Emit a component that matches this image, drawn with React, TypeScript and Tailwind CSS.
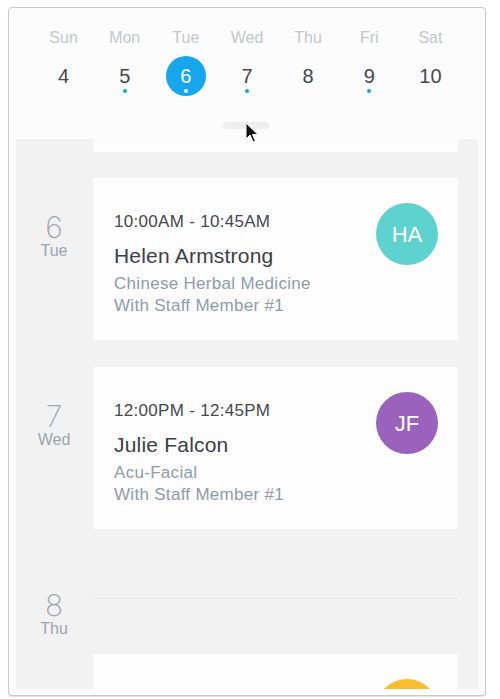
const DAYS = [
  { name: 'Sun', num: 4, dot: false },
  { name: 'Mon', num: 5, dot: true },
  { name: 'Tue', num: 6, dot: true, selected: true },
  { name: 'Wed', num: 7, dot: true },
  { name: 'Thu', num: 8, dot: false },
  { name: 'Fri', num: 9, dot: true },
  { name: 'Sat', num: 10, dot: false },
];

type Appt = {
  time: string;
  name: string;
  service: string;
  staff: string;
  initials: string;
  color: string;
};

function DateLabel({ num, day }: { num: number; day: string }) {
  return (
    <div className="w-[77px] shrink-0 flex flex-col items-center pt-[34px] pr-[1px]">
      <span className="font-['Inter'] font-extralight text-[30px] leading-[30px] text-[#9ea7b1]">
        {num}
      </span>
      <span className="text-[16px] leading-[18px] text-[#9ba4ae]">{day}</span>
    </div>
  );
}

function AppointmentCard({ appt }: { appt: Appt }) {
  return (
    <div className="flex-1 mr-[20px] bg-[#fdfdfd] h-[162px] flex pl-[21px] pr-[20px]">
      <div className="flex-1 pt-[33px]">
        <div className="text-[17px] leading-[22px] tracking-[0.3px] text-[#45494e]">{appt.time}</div>
        <div className="mt-[10px] text-[21px] leading-[26px] tracking-[0.2px] text-[#3b4046]">
          {appt.name}
        </div>
        <div className="mt-[4px] text-[17px] leading-[22px] tracking-[0.3px] text-[#8d9cab]">
          {appt.service}
        </div>
        <div className="text-[17px] leading-[22px] tracking-[0.3px] text-[#8d9cab]">{appt.staff}</div>
      </div>
      <div
        className={`mt-[25px] w-[62px] h-[62px] rounded-full flex items-center justify-center text-white text-[22px] ${appt.color}`}
      >
        {appt.initials}
      </div>
    </div>
  );
}

export default function App() {
  return (
    <div className="w-[500px] h-[699px] bg-white font-['Liberation_Sans',sans-serif] relative">
      <div className="absolute left-[8px] top-[7px] w-[478px] h-[689px] border border-[#c9c9c9] rounded-[4px] bg-[#fcfcfc] px-[7px] pb-[6px] flex flex-col overflow-hidden shadow-[0_1px_1px_rgba(0,0,0,0.12)]">
        {/* Week header */}
        <div className="h-[131px] shrink-0 flex flex-col">
          <div className="grid grid-cols-7 px-[17px] pt-[20px]">
            {DAYS.map((d) => (
              <div key={d.name} className="flex flex-col items-center">
                <span className="text-[16px] leading-[20px] text-[#c3c7cc]">{d.name}</span>
                <div
                  className={`mt-[8px] relative w-[40px] h-[40px] rounded-full flex items-center justify-center ${
                    d.selected ? 'bg-[#16a6ec]' : ''
                  }`}
                >
                  <span
                    className={`text-[20px] leading-[20px] ${
                      d.selected ? 'text-white' : 'text-[#45494e]'
                    }`}
                  >
                    {d.num}
                  </span>
                  {d.dot && (
                    <span
                      className={`absolute top-[33px] left-[18px] w-[4px] h-[4px] rounded-full ${
                        d.selected ? 'bg-white' : 'bg-[#16a6ec]'
                      }`}
                    />
                  )}
                </div>
              </div>
            ))}
          </div>
          <div className="mt-[26px] flex justify-center pr-[3px]">
            <div className="w-[46px] h-[7px] rounded-full bg-[#eeeeee]" />
          </div>
        </div>

        {/* Agenda */}
        <div className="flex-1 bg-[#f2f2f2] overflow-hidden">
          <div className="ml-[77px] mr-[20px] h-[13px] bg-[#fdfdfd]" />
          <div className="mt-[26px] flex">
            <DateLabel num={6} day="Tue" />
            <AppointmentCard
              appt={{
                time: '10:00AM - 10:45AM',
                name: 'Helen Armstrong',
                service: 'Chinese Herbal Medicine',
                staff: 'With Staff Member #1',
                initials: 'HA',
                color: 'bg-[#5dd2cf]',
              }}
            />
          </div>
          <div className="mt-[27px] flex">
            <DateLabel num={7} day="Wed" />
            <AppointmentCard
              appt={{
                time: '12:00PM - 12:45PM',
                name: 'Julie Falcon',
                service: 'Acu-Facial',
                staff: 'With Staff Member #1',
                initials: 'JF',
                color: 'bg-[#9a61bd]',
              }}
            />
          </div>
          <div className="mt-[27px] flex h-[98px]">
            <DateLabel num={8} day="Thu" />
            <div className="flex-1 mr-[20px] pt-[42px]">
              <div className="h-px bg-[#e8e8e8]" />
            </div>
          </div>
          <div className="flex">
            <DateLabel num={9} day="Fri" />
            <AppointmentCard
              appt={{
                time: '12:00PM - 12:45PM',
                name: 'Emma Stone',
                service: 'Acupuncture',
                staff: 'With Staff Member #1',
                initials: 'ES',
                color: 'bg-[#fbbd2e]',
              }}
            />
          </div>
        </div>
      </div>

      {/* Mouse cursor */}
      <svg
        className="absolute left-[245px] top-[122px]"
        width="14"
        height="22"
        viewBox="0 0 14 22"
      >
        <path
          d="M1 1 L1 17 L5 13 L8 20 L10.5 19 L7.5 12.5 L13 12.5 Z"
          fill="#111"
          stroke="#fff"
          strokeWidth="1"
          strokeLinejoin="round"
        />
      </svg>
    </div>
  );
}
